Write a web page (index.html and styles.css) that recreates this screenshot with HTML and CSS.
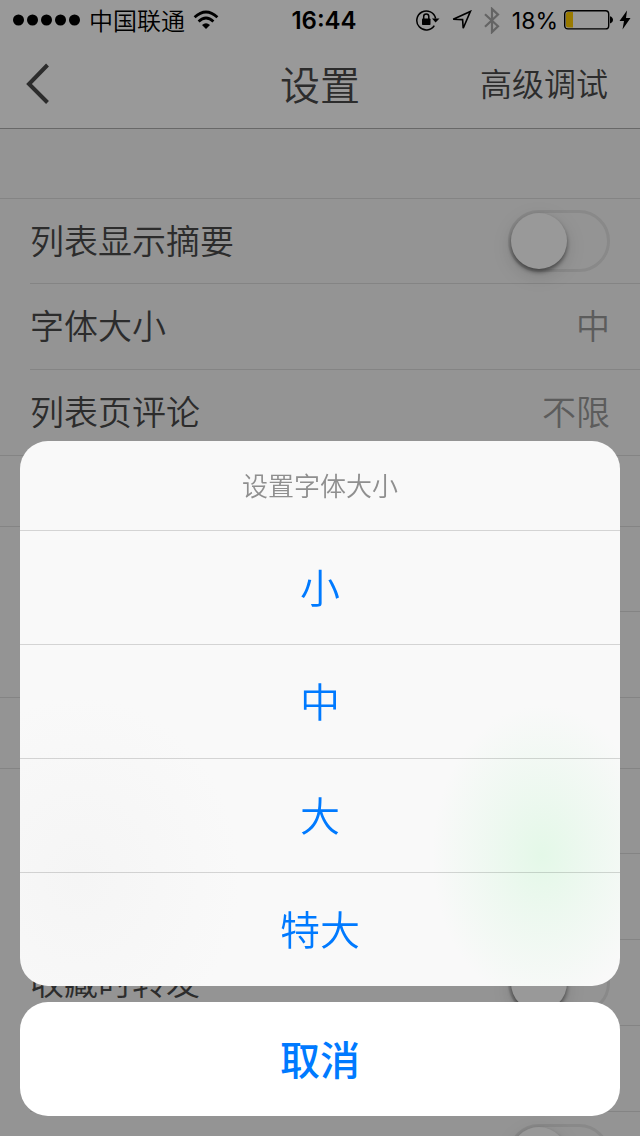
FILE: index.html
```html
<!DOCTYPE html>
<html lang="zh-CN">
<head>
<meta charset="utf-8">
<meta name="viewport" content="width=device-width, initial-scale=1">
<title>设置</title>
<link rel="stylesheet" href="styles.css">
</head>
<body>
<div class="page">
  <div class="topbar">
    <div class="status">
      <div class="status-left">
        <svg class="icon" width="68" height="12" viewBox="0 0 68 12"><circle cx="5.5" cy="6" r="5.5"/><circle cx="19.5" cy="6" r="5.5"/><circle cx="33.5" cy="6" r="5.5"/><circle cx="47.5" cy="6" r="5.5"/><circle cx="61.5" cy="6" r="5.5"/></svg>
        <span class="carrier">中国联通</span>
        <svg class="icon" width="26" height="20" viewBox="0 0 26 20"><g fill="none" stroke="#000" stroke-width="2.8"><path d="M1.6 7.2Q13-3.2 24.4 7.2"/><path d="M5.6 11.5Q13 4.5 20.4 11.5"/></g><path d="M9 14.9Q13 11.5 17 14.9L13 19z"/></svg>
      </div>
      <span class="clock">16:44</span>
      <div class="status-right">
        <svg class="icon" width="24" height="22" viewBox="0 0 24 22"><path d="M18.300 16.600A9.500 9.500 0 1 1 19.600 9.500" fill="none" stroke="#000" stroke-width="1.5"/><path d="M16 9.500h7.500L19.600 13.500z"/><rect x="6" y="9.500" width="8.500" height="6.500" rx=".8"/><path d="M7.700 10V7.600a2.550 2.550 0 0 1 5.100 0V10" fill="none" stroke="#000" stroke-width="1.500"/></svg>
        <svg class="icon" width="20" height="20" viewBox="0 0 20 20"><path d="M1.200 9.300L18.400 1.400L11.200 18.200L10.600 9.600z" fill="none" stroke="#000" stroke-width="1.600"/></svg>
        <svg class="icon" width="16" height="27" viewBox="0 0 16 27"><path d="M1 7.200L14 19.300L8 25.100V1.900L14 7.600L1 19.800" fill="none" stroke="#a7a7a7" stroke-width="2.200"/></svg>
        <span class="percent">18%</span>
        <svg class="icon battery" width="49" height="20" viewBox="0 0 49 20"><rect x=".7" y=".7" width="44" height="18.200" rx="3.200" fill="none" stroke="#000" stroke-width="1.400"/><path d="M2 4a2 2 0 0 1 2-2h5v15.600H4a2 2 0 0 1-2-2z" fill="#fc0"/><path d="M46 6.200q3 1 3 3.600t-3 3.600z"/></svg>
        <svg class="icon" width="12" height="20" viewBox="0 0 12 20"><path d="M8 .5L.5 11H5L3.500 19.500L11.500 8H7z"/></svg>
      </div>
    </div>
    <header class="nav">
      <button class="back" type="button" aria-label="返回"><svg width="24" height="42" viewBox="0 0 24 42"><path d="M21.500 2L3 21L21.500 39.500" fill="none" stroke="#4a4a4a" stroke-width="4"/></svg></button>
      <h1 class="nav-title">设置</h1>
      <button class="nav-action" type="button">高级调试</button>
    </header>
  </div>
  <main class="settings">
    <section class="group">
      <div class="row"><label class="label" for="summary">列表显示摘要</label><input class="switch" type="checkbox" role="switch" id="summary"></div>
      <div class="row"><span class="label">字体大小</span><span class="label value">中</span></div>
      <div class="row"><span class="label">列表页评论</span><span class="label value">不限</span></div>
    </section>
    <section class="group">
      <div class="row"></div>
      <div class="row"></div>
    </section>
    <section class="group">
      <div class="row"></div>
      <div class="row"></div>
      <div class="row"><label class="label" for="forward">收藏时转发</label><input class="switch" type="checkbox" role="switch" id="forward"></div>
      <div class="row"></div>
      <div class="row"><span></span><input class="switch" type="checkbox" role="switch" aria-label="开关"></div>
    </section>
  </main>
</div>
<div class="overlay">
  <div class="sheet" role="dialog" aria-labelledby="sheet-title">
    <h2 class="sheet-title" id="sheet-title">设置字体大小</h2>
    <button class="option" type="button">小</button>
    <button class="option" type="button">中</button>
    <button class="option" type="button">大</button>
    <button class="option" type="button">特大</button>
  </div>
  <button class="cancel" type="button">取消</button>
</div>
</body>
</html>
```
FILE: styles.css
```css
* { box-sizing: border-box; }
body {
  margin: 0;
  overflow: hidden;
  font-family: "Noto Sans CJK SC", sans-serif;
  font-weight: 350;
  color: #4a4a4a;
}
button {
  margin: 0;
  padding: 0;
  border: 0;
  background: none;
  color: inherit;
  font: inherit;
}
svg { display: block; }
.page { height: 100vh; overflow: hidden; background: #f7f7f7; }
.topbar { background: #fff; border-bottom: 1px solid #adadad; }
.status {
  display: grid;
  grid-template-columns: 1fr auto 1fr;
  align-items: center;
  height: 40px;
  padding: 0 9px 0 13px;
  color: #000;
  font-size: 24px;
  line-height: 38px;
}
.status-left, .status-right { display: flex; align-items: center; gap: 8px; }
.status-right { justify-content: flex-end; gap: 12px; }
.clock { padding-left: 4px; font-family: Inter, sans-serif; font-weight: 600; }
.percent { font-family: Inter, sans-serif; font-size: 23px; font-weight: 400; }
.clock, .percent { padding-top: 2px; }
.battery { margin: 0 -6px; }
.nav {
  display: grid;
  grid-template-columns: 1fr auto 1fr;
  align-items: center;
  height: 88px;
  padding: 0 32px;
}
.back { justify-self: start; margin-left: -6px; }
.nav-title { margin: 0; padding-bottom: 2px; font-size: 40px; font-weight: 350; line-height: 56px; }
.nav-action { justify-self: end; padding-bottom: 4px; font-size: 32px; }
.group { margin-top: 70px; border-top: 1px solid #dcdcdc; border-bottom: 1px solid #dcdcdc; }
.group:first-child { margin-top: 69px; }
.row {
  display: flex;
  align-items: center;
  justify-content: space-between;
  height: 86px;
  margin-left: 30px;
  padding-right: 30px;
  font-size: 34px;
}
.row:first-child { height: 84px; }
.row + .row { border-top: 1px solid #dcdcdc; }
.label { padding-bottom: 4px; }
.value { color: #999; }
.switch {
  appearance: none;
  display: flex;
  width: 102px;
  height: 62px;
  margin: 0;
  border: 3px solid #e4e4e4;
  border-radius: 31px;
}
.switch::before {
  content: "";
  width: 56px;
  height: 56px;
  border-radius: 50%;
  background: #fff;
  box-shadow: 0 3px 4px rgba(0, 0, 0, .45), 0 6px 20px rgba(0, 0, 0, .14);
}
.overlay {
  position: fixed;
  inset: 0;
  display: flex;
  flex-direction: column;
  justify-content: flex-end;
  gap: 16px;
  padding: 20px;
  background: rgba(0, 0, 0, .4);
  color: #007aff;
}
.sheet {
  display: flex;
  flex-direction: column;
  overflow: hidden;
  border-radius: 28px;
  background:
    radial-gradient(ellipse 110px 150px at 87% 76%, #e4f8e8, rgba(235, 248, 238, .8) 45%, rgba(249, 249, 249, 0)),
    radial-gradient(ellipse 160px 180px at 10% 80%, #f5f5f5, rgba(249, 249, 249, 0)),
    #f9f9f9;
}
.sheet-title {
  margin: 0;
  padding-bottom: 2px;
  color: #8f8f8f;
  font-size: 26px;
  font-weight: 350;
  line-height: 87px;
  text-align: center;
}
.option {
  height: 114px;
  padding-bottom: 3px;
  border-top: 1px solid rgba(0, 0, 0, .15);
  font-size: 40px;
}
.cancel {
  height: 114px;
  padding-bottom: 3px;
  border-radius: 28px;
  background: #fff;
  font-size: 40px;
  font-weight: 500;
}
```
